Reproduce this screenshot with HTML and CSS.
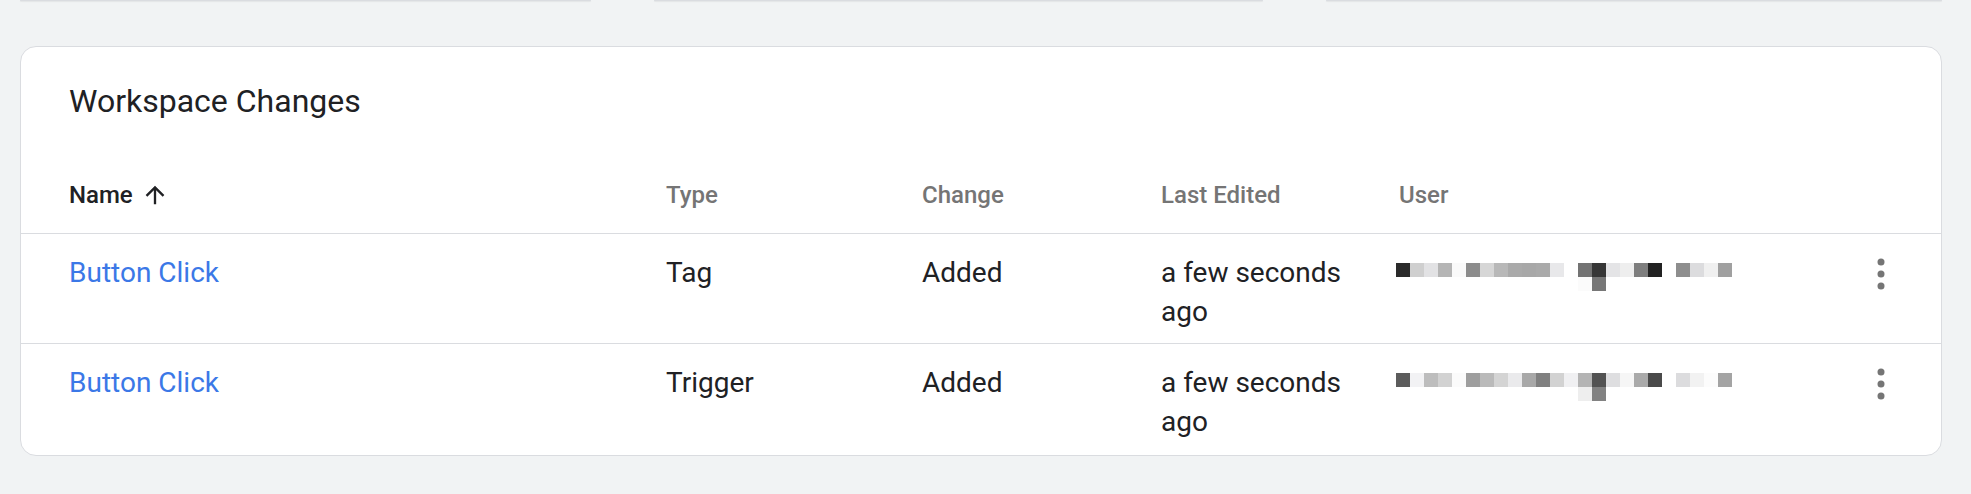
FILE: index.html
```html
<!DOCTYPE html>
<html lang="en">
<head>
<meta charset="utf-8">
<title>Workspace Changes</title>
<link rel="stylesheet" href="styles.css">
</head>
<body>
<div class="page">
  <div class="summary-row">
    <div class="summary"></div>
    <div class="summary"></div>
    <div class="summary"></div>
  </div>

  <section class="card">
    <h2 class="card-title">Workspace Changes</h2>

    <div class="row head">
      <div class="cell sorted">Name
        <svg class="sort-icon" viewBox="0 0 24 24" aria-hidden="true"><path d="M4 12l1.41 1.41L11 7.83V20h2V7.83l5.58 5.59L20 12l-8-8-8 8z"/></svg>
      </div>
      <div class="cell">Type</div>
      <div class="cell">Change</div>
      <div class="cell">Last Edited</div>
      <div class="cell">User</div>
      <div class="cell"></div>
    </div>

    <div class="row">
      <div class="cell"><a class="link" href="#">Button Click</a></div>
      <div class="cell">Tag</div>
      <div class="cell">Added</div>
      <div class="cell">a few seconds ago</div>
      <div class="cell">
        <div class="mosaic">
          <div class="mosaic-line">
            <span style="background:#2a2a2a"></span><span style="background:#cfcfcf"></span><span style="background:#e2e2e4"></span><span style="background:#b5b5b5"></span><span style="background:#fafafa"></span><span style="background:#8c8c8c"></span><span style="background:#d6d6d6"></span><span style="background:#b8b8b8"></span><span style="background:#aaaaaa"></span><span style="background:#a8a8a8"></span><span style="background:#aaaaaa"></span><span style="background:#e8e8ea"></span><span style="background:#ffffff"></span><span style="background:#737373"></span><span style="background:#363636"></span><span style="background:#e4e4e6"></span><span style="background:#eeeeee"></span><span style="background:#7e7e7e"></span><span style="background:#222222"></span><span style="background:#ffffff"></span><span style="background:#8e8e8e"></span><span style="background:#dcdcde"></span><span style="background:#f0f0f0"></span><span style="background:#a0a0a0"></span>
          </div>
          <div class="mosaic-line sub">
            <span style="background:#fbfbfb"></span><span style="background:#777777"></span>
          </div>
        </div>
      </div>
      <div class="cell action">
        <svg class="more" viewBox="0 0 24 24" aria-hidden="true"><circle cx="12" cy="6" r="1.75"/><circle cx="12" cy="12" r="1.75"/><circle cx="12" cy="18" r="1.75"/></svg>
      </div>
    </div>

    <div class="row">
      <div class="cell"><a class="link" href="#">Button Click</a></div>
      <div class="cell">Trigger</div>
      <div class="cell">Added</div>
      <div class="cell">a few seconds ago</div>
      <div class="cell">
        <div class="mosaic">
          <div class="mosaic-line">
            <span style="background:#5c5c5c"></span><span style="background:#f2f2f4"></span><span style="background:#bdbdbd"></span><span style="background:#d2d2d2"></span><span style="background:#fbfbfb"></span><span style="background:#9e9e9e"></span><span style="background:#bababa"></span><span style="background:#d4d4d4"></span><span style="background:#eaeaec"></span><span style="background:#a8a8a8"></span><span style="background:#808080"></span><span style="background:#d2d2d2"></span><span style="background:#f0f0f2"></span><span style="background:#b4b4b4"></span><span style="background:#525252"></span><span style="background:#dedee0"></span><span style="background:#f6f6f6"></span><span style="background:#aaaaaa"></span><span style="background:#4a4a4a"></span><span style="background:#ffffff"></span><span style="background:#dcdcde"></span><span style="background:#f2f2f2"></span><span style="background:#fcfcfc"></span><span style="background:#a4a4a4"></span>
          </div>
          <div class="mosaic-line sub">
            <span style="background:#eeeeee"></span><span style="background:#828282"></span>
          </div>
        </div>
      </div>
      <div class="cell action">
        <svg class="more" viewBox="0 0 24 24" aria-hidden="true"><circle cx="12" cy="6" r="1.75"/><circle cx="12" cy="12" r="1.75"/><circle cx="12" cy="18" r="1.75"/></svg>
      </div>
    </div>
  </section>
</div>
</body>
</html>
```

FILE: styles.css
```css
html, body {
  margin: 0;
  padding: 0;
}

body {
  background: #f1f3f4;
  font-family: Roboto, "Liberation Sans", sans-serif;
  color: #202124;
  width: 1971px;
  height: 494px;
  overflow: hidden;
}

.page {
  padding: 0 29px 0 20px;
}

.summary-row {
  display: grid;
  grid-template-columns: 571px 609px 1fr;
  column-gap: 63px;
  height: 2px;
}

.summary {
  height: 0;
  background: #fff;
  border: 1px solid #dadce0;
  border-top: 0;
  border-radius: 0 0 6px 6px;
  box-shadow: 0 1px 1px rgba(60, 64, 67, 0.08);
}

.card {
  margin-top: 44px;
  background: #fff;
  border: 1px solid #dadce0;
  border-radius: 16px;
  padding-bottom: 2px;
  overflow: hidden;
}

.card-title {
  margin: 0;
  padding: 34px 0 0 48px;
  font-size: 32px;
  line-height: 40px;
  font-weight: 400;
  color: #202124;
}

.row {
  display: grid;
  grid-template-columns: 597px 256px 239px 238px 1fr 48px;
  padding: 19px 36px 12px 48px;
  font-size: 28px;
  line-height: 39px;
  color: #202124;
  border-bottom: 1px solid #dadce0;
}

.row:last-child {
  border-bottom: 0;
}

.row.head {
  padding: 58px 36px 22px 48px;
  font-size: 24px;
  line-height: 32px;
  font-weight: 500;
  color: #757575;
}

.cell {
  padding-right: 24px;
  min-width: 0;
}

.cell.sorted {
  color: #202124;
  display: flex;
  align-items: center;
}

.sort-icon {
  width: 28px;
  height: 28px;
  margin-left: 8px;
  fill: #202124;
}

.link {
  color: #3b78e7;
  text-decoration: none;
}

.mosaic {
  margin: 10px 0 0 -3px;
}

.mosaic-line {
  display: flex;
}

.mosaic-line span {
  display: block;
  width: 14px;
  height: 14px;
  flex: none;
}

.mosaic-line.sub {
  padding-left: 182px;
}

.cell.action {
  padding-right: 0;
  display: flex;
  justify-content: center;
}

.more {
  width: 48px;
  height: 48px;
  margin-top: -3px;
  fill: #757575;
}
```
